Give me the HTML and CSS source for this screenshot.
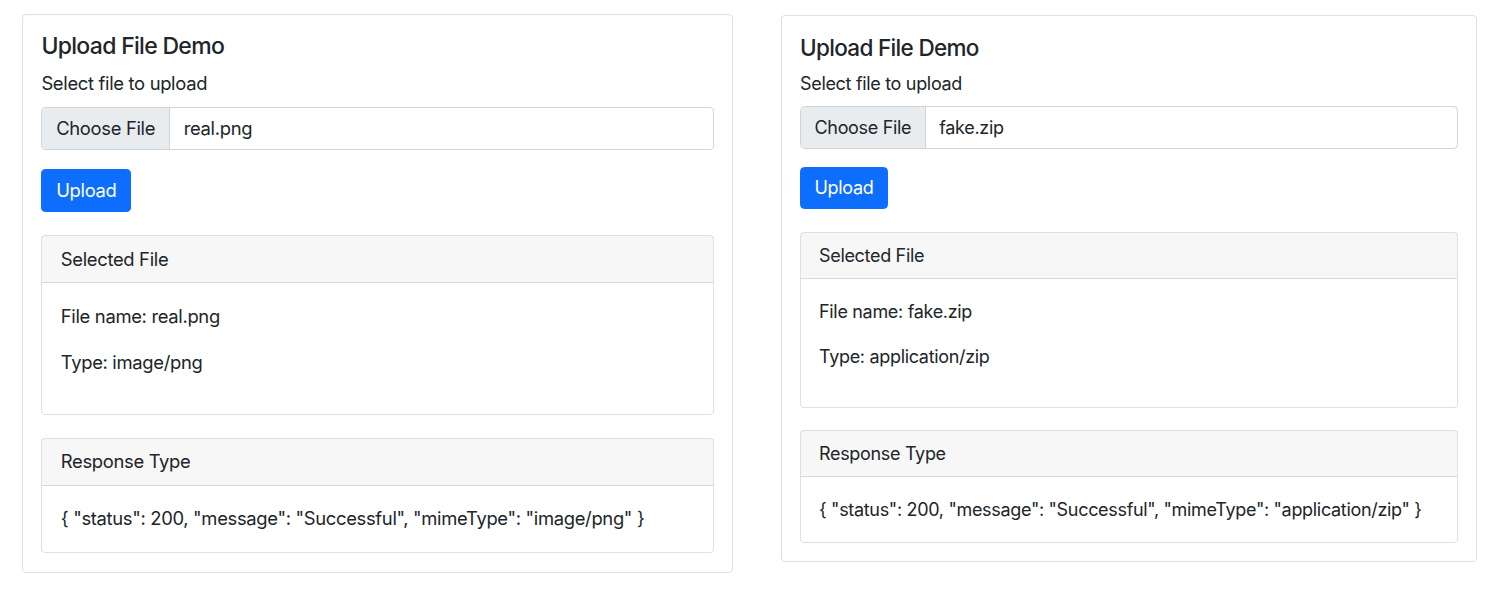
FILE: index.html
```html
<!DOCTYPE html>
<html lang="en">
<head>
<meta charset="utf-8">
<title>Upload File Demo</title>
<link rel="stylesheet" href="styles.css">
</head>
<body>
<main class="page">
  <section class="card panel panel-a">
    <div class="card-body">
      <h5 class="card-title">Upload File Demo</h5>
      <label class="form-label">Select file to upload</label>
      <div class="file-input"><span class="file-btn">Choose File</span><span class="file-name">real.png</span></div>
      <button class="btn" type="button">Upload</button>
      <div class="card info">
        <div class="card-header">Selected File</div>
        <div class="card-body">
          <p>File name: real.png</p>
          <p>Type: image/png</p>
        </div>
      </div>
      <div class="card info">
        <div class="card-header">Response Type</div>
        <div class="card-body">
          <p class="last">{ "status": 200, "message": "Successful", "mimeType": "image/png" }</p>
        </div>
      </div>
    </div>
  </section>
  <section class="card panel panel-b">
    <div class="card-body">
      <h5 class="card-title">Upload File Demo</h5>
      <label class="form-label">Select file to upload</label>
      <div class="file-input"><span class="file-btn">Choose File</span><span class="file-name">fake.zip</span></div>
      <button class="btn" type="button">Upload</button>
      <div class="card info">
        <div class="card-header">Selected File</div>
        <div class="card-body">
          <p>File name: fake.zip</p>
          <p>Type: application/zip</p>
        </div>
      </div>
      <div class="card info">
        <div class="card-header">Response Type</div>
        <div class="card-body">
          <p class="last">{ "status": 200, "message": "Successful", "mimeType": "application/zip" }</p>
        </div>
      </div>
    </div>
  </section>
</main>
</body>
</html>
```

FILE: styles.css
```css
* { box-sizing: border-box; }

html, body {
  margin: 0;
  background: #fff;
}

body {
  font-family: Inter, "Liberation Sans", sans-serif;
  color: #212529;
  letter-spacing: -0.02em;
}

.page {
  display: grid;
  grid-template-columns: 711px 696px;
  column-gap: 48px;
  align-items: start;
  padding: 14px 0 0 22px;
}

.panel-a { font-size: 18.4px; }
.panel-b { font-size: 18px; margin-top: 1px; }

.card {
  display: flex;
  flex-direction: column;
  background: #fff;
  border: 1px solid rgba(0, 0, 0, 0.125);
  border-radius: 0.25em;
  line-height: 1.5;
}

.card-body {
  padding: 1em;
  display: flex;
  flex-direction: column;
  align-items: flex-start;
}

.card-title {
  margin: 0 0 0.4em;
  font-size: 1.25em;
  font-weight: 500;
  line-height: 1.2;
  letter-spacing: -0.03em;
}

.form-label {
  margin-bottom: 0.5em;
}

.file-input {
  align-self: stretch;
  display: flex;
  height: calc(2.25em + 2px);
  border: 1px solid #ced4da;
  border-radius: 0.25em;
  overflow: hidden;
}

.file-btn {
  display: flex;
  align-items: center;
  padding: 0 0.75em;
  background: #e9ecef;
  border-right: 1px solid #ced4da;
}

.file-name {
  display: flex;
  align-items: center;
  padding: 0 0.75em;
}

.btn {
  margin-top: 1em;
  height: 2.375em;
  display: flex;
  align-items: center;
  font: inherit;
  letter-spacing: inherit;
  line-height: 1.5;
  color: #fff;
  background: #0d6efd;
  border: 1px solid #0d6efd;
  border-radius: 0.25em;
  padding: 0 0.75em;
}

.info {
  align-self: stretch;
  margin-top: 1.25em;
}

.card-header {
  padding: 0.5em 1em;
  background: rgba(0, 0, 0, 0.03);
  border-bottom: 1px solid rgba(0, 0, 0, 0.125);
}

.info .card-body {
  padding: 1.05em 1em;
}

.info .card-body p {
  margin: 0 0 1em;
}

.info .card-body p.last {
  margin-bottom: 0;
}
```
